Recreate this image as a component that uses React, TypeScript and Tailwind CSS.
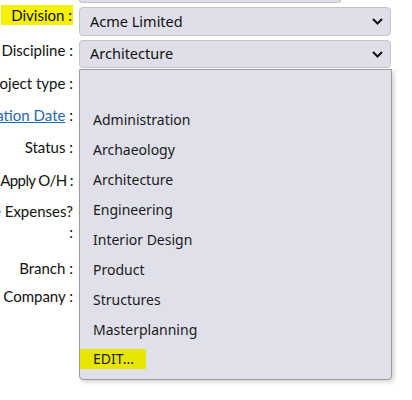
import type { ReactNode } from "react";

const labelFont = { fontFamily: "Lato, 'Noto Sans', sans-serif" };

function Chevron() {
  return (
    <svg width="11" height="7" viewBox="0 0 11 7" className="shrink-0">
      <polyline
        points="1,1 5.5,5.5 10,1"
        fill="none"
        stroke="#111"
        strokeWidth="2"
      />
    </svg>
  );
}

function SelectBox({ value, className }: { value: string; className?: string }) {
  return (
    <div
      className={`flex w-[312px] items-center justify-between rounded-[4px] border border-[#c4c4c8] bg-[#dfdfe9] pl-[10px] pr-[7px] text-[14.5px] text-[#111] ${className ?? ""}`}
      style={{ fontFamily: "'Noto Sans', sans-serif" }}
    >
      <span>{value}</span>
      <Chevron />
    </div>
  );
}

function Row({
  label,
  height,
  children,
}: {
  label: ReactNode;
  height: string;
  children?: ReactNode;
}) {
  return (
    <div className={`flex items-start gap-[6px] ${height}`}>
      <div
        className="flex w-[73px] shrink-0 justify-end overflow-hidden whitespace-nowrap text-right text-[15px] leading-[20px] text-[#111]"
        style={labelFont}
      >
        {label}
      </div>
      {children}
    </div>
  );
}

const options = [
  "",
  "Administration",
  "Archaeology",
  "Architecture",
  "Engineering",
  "Interior Design",
  "Product",
  "Structures",
  "Masterplanning",
];

export default function App() {
  return (
    <div className="relative h-[400px] w-[412px] overflow-hidden bg-white">
      <div className="ml-[79px] h-[3px] w-[262px] rounded-b-[4px] border-x border-b border-[#c4c4c8] bg-[#dfdfe9]" />

      <div className="mt-[2px]">
        <Row
          height="h-[35px]"
          label={<span className="bg-[#f4f000] pl-[10px] pr-[1px]">Division :</span>}
        >
          <SelectBox value="Acme Limited" className="mt-[2px] h-[29px]" />
        </Row>
        <Row height="h-[33px]" label="Discipline :">
          <SelectBox value="Architecture" className="h-[28px]" />
        </Row>
        <Row height="h-[32px]" label="Project type :" />
        <Row
          height="h-[32px]"
          label={
            <span>
              <a href="#" className="text-[#2467b0] underline">
                Expiration Date
              </a>{" "}
              :
            </span>
          }
        />
        <Row height="h-[33px]" label="Status :" />
        <Row
          height="h-[31px]"
          label={<span className="tracking-[-0.6px]">Apply O/H :</span>}
        />
        <Row
          height="h-[57px]"
          label={
            <span className="leading-[21px]">
              Rechargeable Expenses?
              <br />:
            </span>
          }
        />
        <Row height="h-[28px]" label="Branch :" />
        <Row height="h-[28px]" label="Company :" />
      </div>

      <div
        className="absolute left-[79px] top-[69px] w-[313px] rounded-b-[4px] border border-[#9c9c9c] bg-[#e0e0ea] pb-[5px] pt-[4px] shadow-[2px_2px_4px_rgba(0,0,0,0.18)]"
        style={{ fontFamily: "'Noto Sans', sans-serif" }}
      >
        {options.map((o, i) => (
          <div
            key={i}
            className="flex h-[30px] items-center pl-[13px] text-[14px] text-[#1a1a1a]"
          >
            {o}
          </div>
        ))}
        <div className="flex h-[30px] items-center">
          <span className="bg-[#e6e600] pl-[13px] pr-[12px] text-[14px] leading-[20px] text-[#1a1a1a]">
            EDIT...
          </span>
        </div>
      </div>
    </div>
  );
}
